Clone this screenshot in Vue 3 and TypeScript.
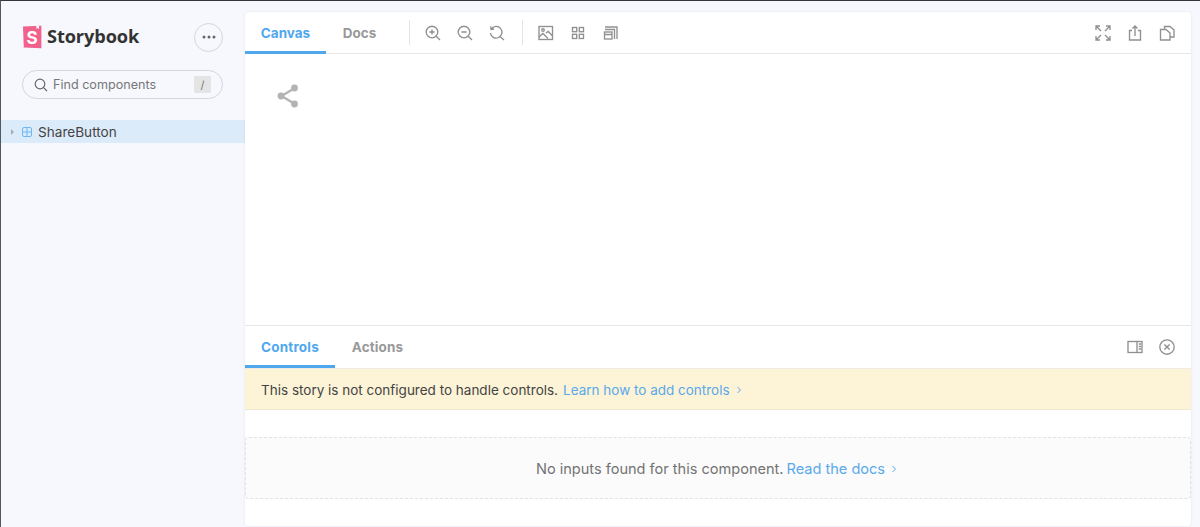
<script setup lang="ts">
const strokeProps = { fill: 'none', stroke: 'currentColor', 'stroke-width': 1.35 }
</script>

<template>
  <div class="app">
    <aside class="sidebar">
      <div class="brand-row">
        <div class="brand">
          <svg class="logo" width="20" height="24" viewBox="0 0 20 24">
            <path d="M1 1.6 19.4 .8V23.2L1.8 22.4Z" fill="#f1618c" />
            <path d="M14.4 1.1 17 .9 17.1 4 15.7 3 14.4 4Z" fill="#fff" />
            <text x="10" y="18.6" text-anchor="middle" class="logo-s">S</text>
          </svg>
          <span class="brand-name">Storybook</span>
        </div>
        <button class="more" type="button">
          <svg width="14" height="4" viewBox="0 0 14 4"><circle cx="2" cy="2" r="1.5" /><circle cx="7" cy="2" r="1.5" /><circle cx="12" cy="2" r="1.5" /></svg>
        </button>
      </div>
      <div class="search">
        <svg width="14" height="14" viewBox="0 0 14 14" fill="none" stroke="#666" stroke-width="1.2"><circle cx="6" cy="6" r="4.8" /><path d="m9.6 9.6 3.4 3.4" /></svg>
        <span class="search-text">Find components</span>
        <kbd>/</kbd>
      </div>
      <div class="tree-row">
        <span class="caret"></span>
        <svg width="10" height="10" viewBox="0 0 10 10" fill="none" stroke="#6bb8f5" stroke-width="1"><rect x=".5" y=".5" width="9" height="9" rx="1.5" /><path d="M5 .5v9M.5 5h9" /></svg>
        <span>ShareButton</span>
      </div>
    </aside>

    <main class="card">
      <header class="bar top-bar">
        <nav class="tabs">
          <span class="tab active canvas-tab">Canvas</span>
          <span class="tab docs-tab">Docs</span>
        </nav>
        <i class="sep first"></i>
        <div class="tools group-zoom">
          <svg viewBox="0 0 16 16" v-bind="strokeProps"><circle cx="7" cy="7" r="5.8" /><path d="m11.2 11.2 3.8 3.8M7 4.4v5.2M4.4 7h5.2" /></svg>
          <svg viewBox="0 0 16 16" v-bind="strokeProps"><circle cx="7" cy="7" r="5.8" /><path d="m11.2 11.2 3.8 3.8M4.4 7h5.2" /></svg>
          <svg viewBox="0 0 16 16" v-bind="strokeProps"><path d="M2.2 4.2A5.8 5.8 0 1 1 1.4 8M1.6 1.4l.5 3 3-.4M11.2 11.8l3.8 3.2" /></svg>
        </div>
        <i class="sep"></i>
        <div class="tools">
          <svg viewBox="0 0 16 16" v-bind="strokeProps"><rect x="1" y="1.5" width="13.5" height="13" /><circle cx="5" cy="5" r="1.3" /><path d="m1 12 4-3.5 5 5M8 8l2.2-1.5 4.3 4.5" /></svg>
          <svg viewBox="0 0 16 16" v-bind="strokeProps"><rect x="2.5" y="2.5" width="4.2" height="4.2" /><rect x="9.3" y="2.5" width="4.2" height="4.2" /><rect x="2.5" y="9.3" width="4.2" height="4.2" /><rect x="9.3" y="9.3" width="4.2" height="4.2" /></svg>
          <svg viewBox="0 0 16 16" v-bind="strokeProps"><rect x="2.5" y="7" width="7.5" height="7" /><path d="M2.5 9.5H10M3 4.5h9.5V14M3 2h12v12" /></svg>
        </div>
        <div class="tools end">
          <svg viewBox="0 0 16 16" v-bind="strokeProps"><path d="M1 1l5 5M15 1l-5 5M1 15l5-5M15 15l-5-5M1 5V1h4M11 1h4v4M1 11v4h4M15 11v4h-4" /></svg>
          <svg viewBox="0 0 16 16" v-bind="strokeProps"><path d="M5 5.5H2.5V15h11V5.5H11M8 11V1M5.5 3.5 8 1l2.5 2.5" /></svg>
          <svg viewBox="0 0 16 16" v-bind="strokeProps"><path d="M5.5 4V1.5H11L15 5v7h-4M1.5 4.5H7L11 8v7H1.5Z" /></svg>
        </div>
      </header>

      <section class="canvas">
        <svg class="share" width="22" height="24" viewBox="0 0 22 24" fill="#b3b3b3" stroke="#b3b3b3">
          <path d="M17 4.5 4.5 12 17 19.5" fill="none" stroke-width="2.2" />
          <circle cx="17.5" cy="4" r="3.4" stroke="none" />
          <circle cx="4" cy="12" r="3.4" stroke="none" />
          <circle cx="17.5" cy="20" r="3.4" stroke="none" />
        </svg>
      </section>

      <section class="panel">
        <header class="bar panel-bar">
          <nav class="tabs">
            <span class="tab active controls-tab">Controls</span>
            <span class="tab actions-tab">Actions</span>
          </nav>
          <div class="tools end">
            <svg viewBox="0 0 16 16" v-bind="strokeProps"><rect x="1" y="2.5" width="14" height="11" /><path d="M10 2.5v11M11.8 5H14M11.8 7.5H14M11.8 10H14" /></svg>
            <svg viewBox="0 0 16 16" v-bind="strokeProps"><circle cx="8" cy="8" r="7.2" /><path d="m5.4 5.4 5.2 5.2M10.6 5.4l-5.2 5.2" stroke-width="1.4" /></svg>
          </div>
        </header>
        <div class="notice">
          <span>This story is not configured to handle controls.</span>
          <a class="link">Learn how to add controls
            <svg width="6" height="8" viewBox="0 0 6 8" fill="none" stroke="currentColor"><path d="m1.5 1 3 3-3 3" /></svg>
          </a>
        </div>
        <div class="empty">
          <span>No inputs found for this component.</span>
          <a class="link">Read the docs
            <svg width="6" height="8" viewBox="0 0 6 8" fill="none" stroke="currentColor"><path d="m1.5 1 3 3-3 3" /></svg>
          </a>
        </div>
      </section>
    </main>
  </div>
</template>

<style>
html, body { margin: 0; background: #f6f8fd; }
</style>

<style scoped>
.app {
  width: 1200px;
  height: 527px;
  box-sizing: border-box;
  display: flex;
  overflow: hidden;
  background: #f6f8fd;
  border-top: 1px solid #33373a;
  border-left: 1px solid #55585b;
  font-family: Inter, "Open Sans", sans-serif;
  color: #333;
}
.sidebar { width: 244px; flex: none; padding-top: 21px; }
.brand-row { display: flex; justify-content: space-between; align-items: center; padding: 0 22px 0 21px; height: 30px; }
.brand { display: flex; align-items: center; gap: 5px; }
.logo { display: block; }
.logo-s { font: 700 17px Inter, sans-serif; fill: #fff; }
.brand-name { font: 700 18.2px/24px "Open Sans", sans-serif; letter-spacing: -.1px; color: #333; margin-top: -2px; }
.more {
  width: 29px; height: 29px; box-sizing: border-box; padding: 0;
  display: flex; align-items: center; justify-content: center;
  border: 1px solid #d4d6d9; border-radius: 50%; background: transparent;
}
.more svg { fill: #666; }
.search {
  margin: 18px 22px 0 21px; height: 29px; box-sizing: border-box;
  display: flex; align-items: center; padding: 0 11px;
  border: 1px solid #d4d6d9; border-radius: 15px; font-size: 12.6px; color: #777;
}
.search-text { margin-left: 5px; flex: 1; }
kbd {
  width: 17px; height: 17px; display: flex; align-items: center; justify-content: center;
  background: #e4e4e4; color: #777; font: 11px Inter, sans-serif; border-radius: 1px;
}
.tree-row {
  margin-top: 21px; height: 23px; display: flex; align-items: center;
  background: #dcebfa; font-size: 13.6px; color: #444; padding-left: 10px;
}
.caret { width: 0; height: 0; border-left: 3px solid #aaa; border-top: 3px solid transparent; border-bottom: 3px solid transparent; margin-right: 8px; }
.tree-row svg { margin-right: 6px; }

.card {
  width: 946px; height: 514px; margin-top: 11px; flex: none;
  background: #fff; border-radius: 4px; box-shadow: 0 0 3px rgba(0,0,0,.08);
  display: flex; flex-direction: column; overflow: hidden;
}
.bar { display: flex; align-items: stretch; flex: none; border-bottom: 1px solid #e6e6e6; box-sizing: border-box; }
.top-bar { height: 42px; }
.panel-bar { height: 42px; border-bottom: 0; }
.tabs { display: flex; }
.tab {
  display: flex; align-items: center; justify-content: center; box-sizing: border-box;
  font-size: 13.5px; font-weight: 700; color: #999;
  border-bottom: 3px solid transparent; height: 42px; padding-top: 2px;
}
.active { color: #4fa8ee; border-bottom-color: #4fa8ee; }
.canvas-tab { width: 81px; }
.docs-tab { width: 67px; }
.controls-tab { width: 90px; letter-spacing: .2px; }
.actions-tab { width: 85px; letter-spacing: .1px; }
.sep { width: 1px; height: 25px; background: #e4e4e4; align-self: center; margin-top: -1px; }
.sep.first { margin-left: 16px; }
.tools { display: flex; align-items: center; gap: 16px; padding: 0 16px 0 15px; color: #909090; }
.group-zoom { padding-right: 17px; }
.tools svg { width: 16px; height: 16px; display: block; }
.tools.end { margin-left: auto; padding: 0 16px; }
.canvas { height: 272px; flex: none; padding: 30px 0 0 32px; box-sizing: border-box; border-bottom: 1px solid #e6e6e6; }
.share { display: block; }
.panel { flex: 1; display: flex; flex-direction: column; }
.notice {
  height: 42px; flex: none; box-sizing: border-box; display: flex; align-items: center; gap: 5px;
  padding: 2px 0 0 16px; background: #fdf3d6; font-size: 13.5px; color: #444;
  border-top: 1px solid #f0ece0; border-bottom: 1px solid #efe6cf;
}
.link { color: #59a9ec; display: inline-flex; align-items: center; gap: 6px; }
.empty {
  margin-top: 27px; height: 62px; flex: none; box-sizing: border-box;
  display: flex; align-items: center; justify-content: center; gap: 3px; padding: 2px 3px 0 0;
  background: #fbfbfb; border: 1px dashed #e2e2e2; border-radius: 4px; font-size: 14.55px; color: #737373;
}
</style>
